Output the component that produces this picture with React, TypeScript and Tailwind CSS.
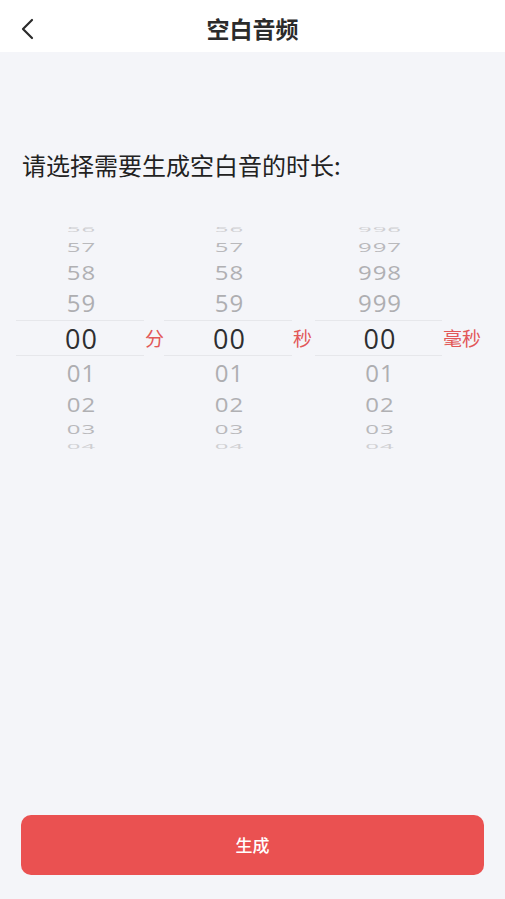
import React from 'react';

const CJK = "font-['Noto_Sans_CJK_SC',sans-serif]";
const NUM = "font-['Open_Sans','Noto_Sans_CJK_SC',sans-serif]";

type Row = { value: string; cls: string; inner: string };

// wheel rows, top to bottom; heights follow the 3D projection of the picker
const makeRows = (above: string[]): Row[] => [
  { value: above[0], cls: 'h-[15px]', inner: 'scale-y-[0.3] text-[#cfcfd2]' },
  { value: above[1], cls: 'h-[21px]', inner: 'scale-y-[0.55] text-[#b9b9bc]' },
  { value: above[2], cls: 'h-[29px]', inner: 'scale-y-[0.85] text-[#b0b0b3]' },
  { value: above[3], cls: 'h-[34px]', inner: 'scale-y-[0.96] text-[#aeaeb1]' },
  { value: '00', cls: 'h-[36px]', inner: 'text-[27px] text-[#2e2e30]' },
  { value: '01', cls: 'h-[34px]', inner: 'scale-y-[0.96] text-[#aeaeb1]' },
  { value: '02', cls: 'h-[28px]', inner: 'scale-y-[0.85] text-[#b0b0b3]' },
  { value: '03', cls: 'h-[21px]', inner: 'scale-y-[0.55] text-[#b9b9bc]' },
  { value: '04', cls: 'h-[14px]', inner: 'scale-y-[0.28] text-[#cfcfd2]' },
];

const Wheel: React.FC<{ above: string[]; width: string }> = ({ above, width }) => {
  const rows = makeRows(above);
  return (
    <div className={`${width} flex flex-col`}>
      {rows.map((r, i) => (
        <div
          key={i}
          className={`${r.cls} flex items-center justify-center pl-[3px] ${i === 4 ? 'border-y border-[#e6e7eb]' : ''}`}
        >
          <span className={`${NUM} text-[24px] leading-none tracking-[1px] ${r.inner}`}>{r.value}</span>
        </div>
      ))}
    </div>
  );
};

const Unit: React.FC<{ label: string; width: string }> = ({ label, width }) => (
  <div className={`${width} h-[232px] pt-[99px]`}>
    <div className={`h-[36px] flex items-center pl-[1px] ${CJK} text-[19px] text-[#e25858]`}>{label}</div>
  </div>
);

export default function App() {
  return (
    <div className="min-h-screen w-full bg-[#f4f5f9] flex flex-col">
      {/* Header */}
      <div className="h-[52px] bg-white grid grid-cols-[60px_1fr_60px] items-center">
        <div className="pl-[19px] pt-[6px] flex items-center">
          <svg width="18" height="22" viewBox="0 0 18 22" fill="none">
            <path d="M13 2 L4 11 L13 20" stroke="#2b2b2b" strokeWidth="2.2" strokeLinecap="round" strokeLinejoin="round" />
          </svg>
        </div>
        <div className={`text-center ${CJK} text-[23px] font-bold text-[#2b2b2b] pt-[4px]`}>空白音频</div>
        <div />
      </div>

      {/* Prompt */}
      <div className={`mt-[97px] pl-[22px] ${CJK} text-[24px] leading-[32px] text-[#222]`}>
        请选择需要生成空白音的时长:
      </div>

      {/* Pickers */}
      <div className="mt-[40px] pl-[16px] flex items-start">
        <Wheel above={['56', '57', '58', '59']} width="w-[128px]" />
        <Unit label="分" width="w-[20px]" />
        <Wheel above={['56', '57', '58', '59']} width="w-[128px]" />
        <Unit label="秒" width="w-[23px]" />
        <Wheel above={['996', '997', '998', '999']} width="w-[127px]" />
        <Unit label="毫秒" width="w-[44px]" />
      </div>

      {/* Button */}
      <div className="mt-auto px-[21px] pb-[24px]">
        <button className={`w-full h-[60px] rounded-[10px] bg-[#ea5151] text-white ${CJK} text-[17px] font-medium`}>
          生成
        </button>
      </div>
    </div>
  );
}
